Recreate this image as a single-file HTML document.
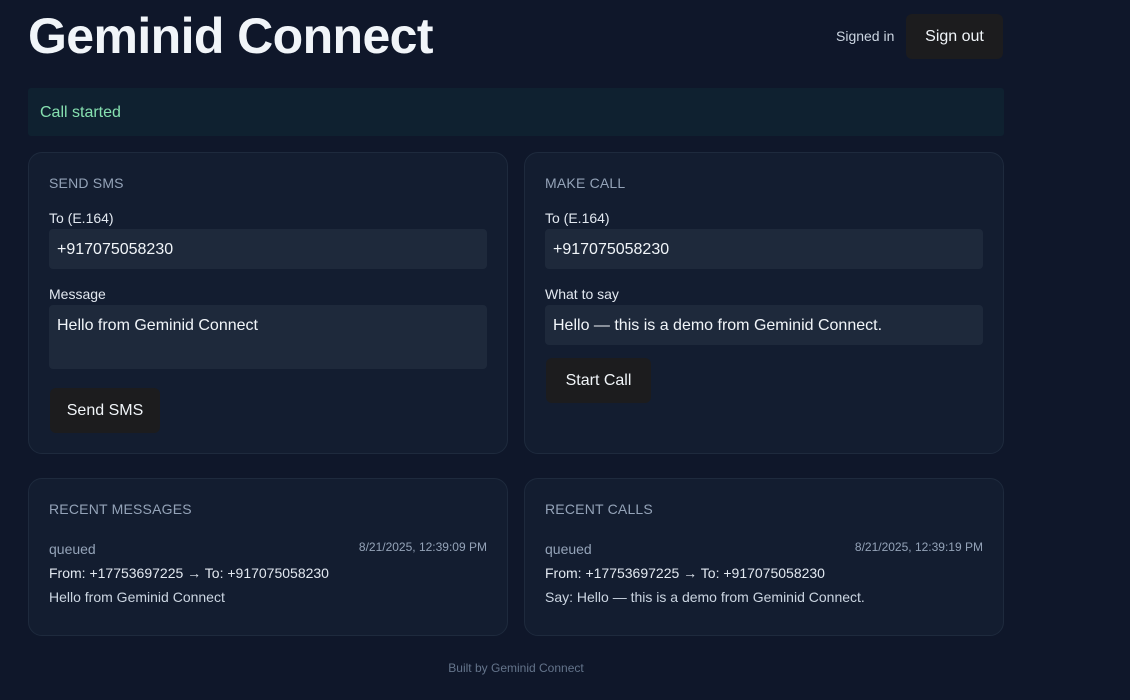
<!DOCTYPE html>
<html><head><meta charset="utf-8"><style>
*{box-sizing:border-box;margin:0;padding:0}
body{width:1130px;height:700px;background:#0f172a;font-family:"Liberation Sans","DejaVu Sans",sans-serif;color:#e2e8f0;position:relative;overflow:hidden}
.a{position:absolute}
h1{position:absolute;left:28px;top:7px;font-size:50px;font-weight:bold;color:#f1f5f9;letter-spacing:-0.6px}
.btn{position:absolute;background:#1c1c1e;color:#f1f5f9;border-radius:6px;font-size:16px;display:flex;align-items:center;justify-content:center}
.card{position:absolute;background:#131d30;border:1px solid #1e2a3d;border-radius:14px}
.h{position:absolute;font-size:14px;color:#94a3b8;letter-spacing:0.2px}
.l{position:absolute;font-size:14px;color:#e2e8f0}
.in{position:absolute;background:#1e293b;border-radius:4px;font-size:16px;color:#f1f5f9;padding:12px 8px 0;height:40px}
.s{position:absolute;font-size:14px;color:#e2e8f0}
.m{position:absolute;font-size:14px;color:#94a3b8}
.t{position:absolute;font-size:12px;color:#94a3b8}
</style></head><body>
<h1>Geminid Connect</h1>
<div class="a" style="left:836px;top:28px;font-size:14px;color:#cbd5e1">Signed in</div>
<div class="btn" style="left:906px;top:14px;width:97px;height:45px">Sign out</div>
<div class="a" style="left:28px;top:88px;width:976px;height:48px;background:#0f2130;border-radius:3px;color:#86e0b0;font-size:16px;padding:16px 12px">Call started</div>

<div class="card" style="left:28px;top:152px;width:480px;height:302px"></div>
<div class="h" style="left:49px;top:175px">SEND SMS</div>
<div class="l" style="left:49px;top:210px">To (E.164)</div>
<div class="in" style="left:49px;top:229px;width:438px">+917075058230</div>
<div class="l" style="left:49px;top:286px">Message</div>
<div class="in" style="left:49px;top:305px;width:438px;height:64px">Hello from Geminid Connect</div>
<div class="btn" style="left:50px;top:388px;width:110px;height:45px">Send SMS</div>

<div class="card" style="left:524px;top:152px;width:480px;height:302px"></div>
<div class="h" style="left:545px;top:175px">MAKE CALL</div>
<div class="l" style="left:545px;top:210px">To (E.164)</div>
<div class="in" style="left:545px;top:229px;width:438px">+917075058230</div>
<div class="l" style="left:545px;top:286px">What to say</div>
<div class="in" style="left:545px;top:305px;width:438px">Hello — this is a demo from Geminid Connect.</div>
<div class="btn" style="left:546px;top:358px;width:105px;height:45px">Start Call</div>

<div class="card" style="left:28px;top:478px;width:480px;height:158px"></div>
<div class="h" style="left:49px;top:501px">RECENT MESSAGES</div>
<div class="m" style="left:49px;top:541px">queued</div>
<div class="t" style="right:643px;top:540px">8/21/2025, 12:39:09 PM</div>
<div class="s" style="left:49px;top:565px">From: +17753697225 → To: +917075058230</div>
<div class="s" style="left:49px;top:589px;color:#cbd5e1">Hello from Geminid Connect</div>

<div class="card" style="left:524px;top:478px;width:480px;height:158px"></div>
<div class="h" style="left:545px;top:501px">RECENT CALLS</div>
<div class="m" style="left:545px;top:541px">queued</div>
<div class="t" style="right:147px;top:540px">8/21/2025, 12:39:19 PM</div>
<div class="s" style="left:545px;top:565px">From: +17753697225 → To: +917075058230</div>
<div class="s" style="left:545px;top:589px;color:#cbd5e1">Say: Hello — this is a demo from Geminid Connect.</div>

<div class="a" style="left:0;width:1032px;text-align:center;top:661px;font-size:12px;color:#64748b">Built by Geminid Connect</div>
</body></html>
